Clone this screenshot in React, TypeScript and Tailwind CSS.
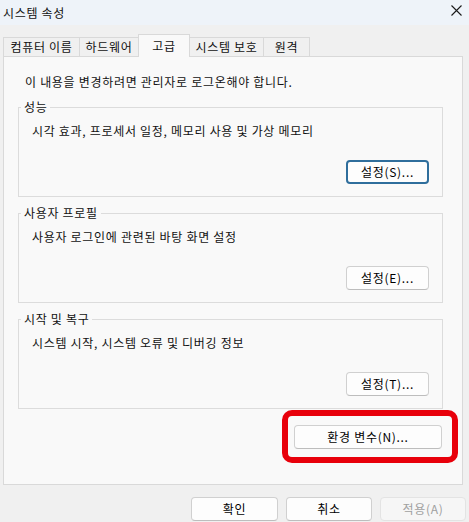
import React from "react";

const groups = [
  { title: "성능", desc: "시각 효과, 프로세서 일정, 메모리 사용 및 가상 메모리", button: "설정(S)...", focused: true },
  { title: "사용자 프로필", desc: "사용자 로그인에 관련된 바탕 화면 설정", button: "설정(E)...", focused: false },
  { title: "시작 및 복구", desc: "시스템 시작, 시스템 오류 및 디버깅 정보", button: "설정(T)...", focused: false },
];

const tabs = [
  { label: "컴퓨터 이름", w: "w-[77px]" },
  { label: "하드웨어", w: "w-[60px]" },
  { label: "고급", w: "w-[52px]", active: true },
  { label: "시스템 보호", w: "w-[75px]" },
  { label: "원격", w: "w-[47px]" },
];

function Button({ children, className = "", focused = false, disabled = false }: { children: React.ReactNode; className?: string; focused?: boolean; disabled?: boolean }) {
  return (
    <button
      className={`flex h-[24px] items-center justify-center rounded-[4px] text-[12px] leading-none ${
        focused
          ? "border-2 border-[#2f6e9c] bg-[#fdfdfd] text-black"
          : disabled
          ? "border border-[#e3e3e3] bg-[#f6f6f6] text-[#a0a0a0]"
          : "border border-[#d0d0d0] border-b-[#bdbdbd] bg-[#fdfdfd] text-black"
      } ${className}`}
    >
      {children}
    </button>
  );
}

export default function App() {
  return (
    <div className="h-[522px] w-[469px] overflow-hidden bg-[#f0f0f0] font-['Noto_Sans_CJK_KR','Noto_Sans',sans-serif] text-[12px] tracking-[0.7px] text-[#111]">
      {/* title bar */}
      <div className="flex h-[25px] items-center justify-between bg-[#eef3f9] pl-[3px] pr-[7px]">
        <span className="text-[12px] leading-[16px]">시스템 속성</span>
        <svg width="11" height="11" viewBox="0 0 11 11" className="mb-[4px]">
          <path d="M0.5 0.5 L10.5 10.5 M10.5 0.5 L0.5 10.5" stroke="#1a1a1a" strokeWidth="1.1" fill="none" />
        </svg>
      </div>

      {/* tabs */}
      <div className="mt-[9px] flex h-[22px] items-end pl-[3px]">
        {tabs.map((t, i) =>
          t.active ? (
            <div
              key={t.label}
              className={`relative z-10 -mb-[1px] -ml-[1px] flex h-[23px] ${t.w} items-center justify-center border border-b-0 border-[#d9d9d9] bg-[#f9f9f9] pb-[1px]`}
            >
              {t.label}
            </div>
          ) : (
            <div
              key={t.label}
              className={`flex h-[19px] ${t.w} items-center justify-center border border-b-0 border-[#d9d9d9] bg-[#f0f0f0] ${i > 0 ? "-ml-[1px]" : ""}`}
            >
              {t.label}
            </div>
          )
        )}
      </div>

      {/* panel */}
      <div className="ml-[3px] flex h-[429px] w-[460px] flex-col border border-[#d9d9d9] bg-[#f9f9f9]">
        <p className="ml-[21px] mt-[17px] leading-[16px]">이 내용을 변경하려면 관리자로 로그온해야 합니다.</p>

        {groups.map((g, i) => (
          <div
            key={g.title}
            className={`relative ml-[14px] flex h-[90px] w-[425px] flex-col border border-[#dcdcdc] px-[13px] pt-[15px] ${i === 0 ? "mt-[17px]" : "mt-[16px]"}`}
          >
            <span className="absolute left-[2px] top-[-9px] bg-[#f9f9f9] px-[3px] leading-[16px]">{g.title}</span>
            <p className="leading-[16px]">{g.desc}</p>
            <Button focused={g.focused} className="mt-[21px] w-[83px] self-end">
              {g.button}
            </Button>
          </div>
        ))}

        <div className="mr-[20px] mt-[16px] flex justify-end">
          <div className="relative">
            <Button className="w-[148px]">환경 변수(N)...</Button>
            <div className="pointer-events-none absolute -bottom-[14px] -left-[12px] -right-[16px] -top-[15px] rounded-[10px] border-[6px] border-[#e8000b]" />
          </div>
        </div>
      </div>

      {/* bottom buttons */}
      <div className="mt-[12px] flex justify-end gap-[8px] pr-[3px]">
        <Button className="w-[87px]">확인</Button>
        <Button className="w-[86px]">취소</Button>
        <Button disabled className="w-[86px]">적용(A)</Button>
      </div>
    </div>
  );
}
